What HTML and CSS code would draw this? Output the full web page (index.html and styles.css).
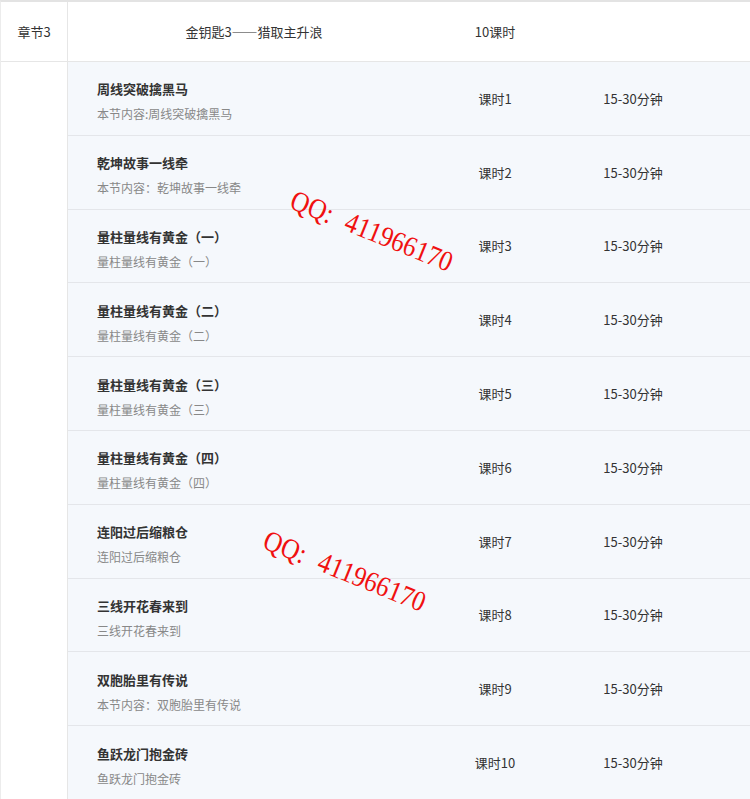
FILE: index.html
```html
<!DOCTYPE html>
<html lang="zh-CN">
<head>
<meta charset="utf-8">
<title>章节3</title>
<link rel="stylesheet" href="styles.css">
</head>
<body>
<div class="chapter">
  <div class="head">
    <div class="c-chap">章节3</div>
    <div class="c-name">金钥匙3——猎取主升浪</div>
    <div class="c-num">10课时</div>
    <div class="c-dur"></div>
  </div>
  <div class="body">
    <div class="side"></div>
    <div class="lessons">
      <div class="row"><div class="info"><div class="t">周线突破擒黑马</div><div class="s">本节内容:周线突破擒黑马</div></div><div class="num">课时1</div><div class="dur">15-30分钟</div></div>
      <div class="row"><div class="info"><div class="t">乾坤故事一线牵</div><div class="s">本节内容：乾坤故事一线牵</div></div><div class="num">课时2</div><div class="dur">15-30分钟</div></div>
      <div class="row"><div class="info"><div class="t">量柱量线有黄金（一）</div><div class="s">量柱量线有黄金（一）</div></div><div class="num">课时3</div><div class="dur">15-30分钟</div></div>
      <div class="row"><div class="info"><div class="t">量柱量线有黄金（二）</div><div class="s">量柱量线有黄金（二）</div></div><div class="num">课时4</div><div class="dur">15-30分钟</div></div>
      <div class="row"><div class="info"><div class="t">量柱量线有黄金（三）</div><div class="s">量柱量线有黄金（三）</div></div><div class="num">课时5</div><div class="dur">15-30分钟</div></div>
      <div class="row"><div class="info"><div class="t">量柱量线有黄金（四）</div><div class="s">量柱量线有黄金（四）</div></div><div class="num">课时6</div><div class="dur">15-30分钟</div></div>
      <div class="row"><div class="info"><div class="t">连阳过后缩粮仓</div><div class="s">连阳过后缩粮仓</div></div><div class="num">课时7</div><div class="dur">15-30分钟</div></div>
      <div class="row"><div class="info"><div class="t">三线开花春来到</div><div class="s">三线开花春来到</div></div><div class="num">课时8</div><div class="dur">15-30分钟</div></div>
      <div class="row"><div class="info"><div class="t">双胞胎里有传说</div><div class="s">本节内容：双胞胎里有传说</div></div><div class="num">课时9</div><div class="dur">15-30分钟</div></div>
      <div class="row"><div class="info"><div class="t">鱼跃龙门抱金砖</div><div class="s">鱼跃龙门抱金砖</div></div><div class="num">课时10</div><div class="dur">15-30分钟</div></div>
    </div>
  </div>
  <div class="wm wm1">QQ:<span class="gap"></span>411966170</div>
  <div class="wm wm2">QQ:<span class="gap"></span>411966170</div>
</div>
</body>
</html>
```
FILE: styles.css
```css
html, body {
  margin: 0;
  padding: 0;
  background: #fff;
}
body {
  font-family: "Noto Sans CJK SC", "Noto Sans", sans-serif;
  font-size: 13px;
  color: #333;
  overflow: hidden;
}
.chapter {
  position: relative;
  border-top: 2px solid #e3e3e3;
  border-left: 1px solid #ececec;
}
.head {
  display: grid;
  grid-template-columns: 67px 372px 110px 166px 1fr;
  height: 59px;
  border-bottom: 1px solid #e6e6e6;
  align-items: center;
  background: #fff;
}
.head > div {
  height: 100%;
  display: flex;
  align-items: center;
  justify-content: center;
}
.c-chap {
  border-right: 1px solid #e6e6e6;
}
.body {
  display: flex;
}
.side {
  width: 66px;
  flex: none;
  border-right: 1px solid #e6e6e6;
  background: #fff;
}
.lessons {
  flex: 1;
}
.row {
  display: grid;
  grid-template-columns: 372px 110px 166px 1fr;
  box-sizing: border-box;
  height: 73.8px;
  border-bottom: 1px solid #e4e6ea;
  background: #f5f8fc;
  align-items: center;
}
.info {
  padding-left: 29px;
  padding-top: 6px;
}
.t {
  font-weight: bold;
  font-size: 13px;
  line-height: 18px;
  color: #333;
}
.s {
  font-size: 12px;
  line-height: 16px;
  margin-top: 8px;
  color: #888;
}
.num, .dur {
  text-align: center;
  font-size: 13px;
}
.wm {
  position: absolute;
  font-family: "Liberation Serif", serif;
  font-size: 26px;
  line-height: 1;
  color: #f01010;
  white-space: nowrap;
  transform-origin: left top;
  transform: rotate(22deg) scale(0.98, 1.1);
}
.gap {
  display: inline-block;
  width: 15px;
}
.wm1 {
  left: 296px;
  top: 184px;
}
.wm2 {
  left: 269px;
  top: 524px;
}
```
